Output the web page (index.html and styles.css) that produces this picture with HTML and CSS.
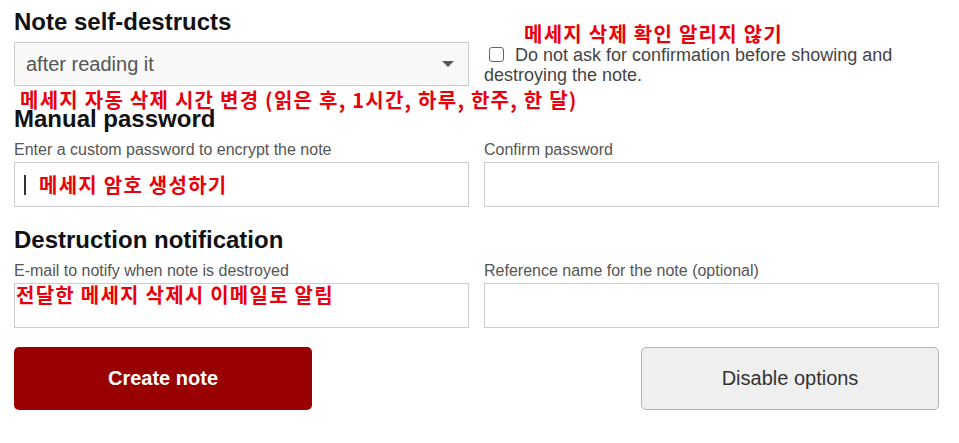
FILE: index.html
```html
<!DOCTYPE html>
<html>
    <head>
        <title>New note options</title>
        <link rel="stylesheet" href="styles.css">
    </head>
    <body>
        <form class="options">
            <div class="row">
                <div class="col">
                    <h2>Note self-destructs</h2>
                    <div class="select">
                        <span>after reading it</span>
                        <svg width="12" height="6" viewBox="0 0 12 6"><path d="M0 0h12L6 6z" fill="#555"/></svg>
                    </div>
                </div>
                <div class="col confirm">
                    <div class="memo memo-confirm">메세지 삭제 확인 알리지 않기</div>
                    <label class="check"><input type="checkbox"> Do not ask for confirmation before showing and destroying the note.</label>
                </div>
            </div>
            <div class="memo memo-duration">메세지 자동 삭제 시간 변경 (읽은 후, 1시간, 하루, 한주, 한 달)</div>

            <h2>Manual password</h2>
            <div class="row">
                <div class="field">
                    <label>Enter a custom password to encrypt the note</label>
                    <div class="input input-password"><span class="caret"></span><span class="memo">메세지 암호 생성하기</span></div>
                </div>
                <div class="field">
                    <label>Confirm password</label>
                    <div class="input"></div>
                </div>
            </div>

            <h2 class="section">Destruction notification</h2>
            <div class="row">
                <div class="field">
                    <label>E-mail to notify when note is destroyed</label>
                    <div class="input input-email"><span class="memo">전달한 메세지 삭제시 이메일로 알림</span></div>
                </div>
                <div class="field">
                    <label>Reference name for the note (optional)</label>
                    <div class="input"></div>
                </div>
            </div>

            <div class="buttons">
                <button type="button" class="btn btn-create">Create note</button>
                <button type="button" class="btn btn-disable">Disable options</button>
            </div>
        </form>
    </body>
</html>
```
FILE: styles.css
```css
body {
	margin: 0;
	background-color: #fff;
	color: #111;
	font-family: "Liberation Sans", Arial, sans-serif;
}

*, ::before, ::after {
	box-sizing: border-box;
}

.options {
	padding: 8px 20px 0 14px;
}

h2 {
	margin: 0;
	font-size: 24px;
	line-height: 28px;
	font-weight: 700;
	color: #111;
}

h2.section {
	margin-top: 19px;
}

.row {
	display: grid;
	grid-template-columns: 1fr 1fr;
	column-gap: 15px;
}

.select {
	display: flex;
	align-items: center;
	justify-content: space-between;
	height: 44px;
	margin-top: 6px;
	padding: 0 14px 0 11px;
	background-color: #f8f8f8;
	border: 1px solid #ccc;
	color: #555;
	font-size: 20px;
}

.memo {
	color: #e8000b;
	font-family: "Noto Sans CJK KR", sans-serif;
	font-size: 20px;
	line-height: 19px;
	font-weight: 700;
	letter-spacing: 1.25px;
	white-space: nowrap;
}

.memo-duration {
	margin: 4px 0 -4px 6px;
}

.confirm {
	padding-top: 16px;
}

.memo-confirm {
	margin-left: 40px;
}

.check {
	display: block;
	margin-top: 2px;
	color: #444;
	font-size: 18px;
	line-height: 20px;
}

.check input {
	appearance: none;
	width: 15px;
	height: 15px;
	margin: 0 6px 0 5px;
	border: 1px solid #666;
	border-radius: 3px;
	background-color: #fff;
	vertical-align: -1px;
}

.field label {
	display: block;
	margin-top: 8px;
	color: #555;
	font-size: 16px;
	line-height: 18px;
}

.input {
	display: flex;
	align-items: center;
	height: 45px;
	margin-top: 3px;
	border: 1px solid #ccc;
	background-color: #fff;
}

.input-password {
	padding-left: 9px;
}

.caret {
	width: 2px;
	height: 20px;
	margin-right: 13px;
	background-color: #333;
}

.input-email {
	align-items: flex-start;
	padding: 1px 0 0 1px;
}

.buttons {
	display: flex;
	justify-content: space-between;
	margin-top: 19px;
}

.btn {
	width: 298px;
	height: 63px;
	border-radius: 5px;
	font-family: "Liberation Sans", Arial, sans-serif;
	font-size: 20px;
	cursor: pointer;
}

.btn-create {
	background-color: #990000;
	border: none;
	color: #fff;
	font-weight: 700;
}

.btn-disable {
	background-color: #efefef;
	border: 1px solid #b3b3b3;
	color: #333;
}
```
